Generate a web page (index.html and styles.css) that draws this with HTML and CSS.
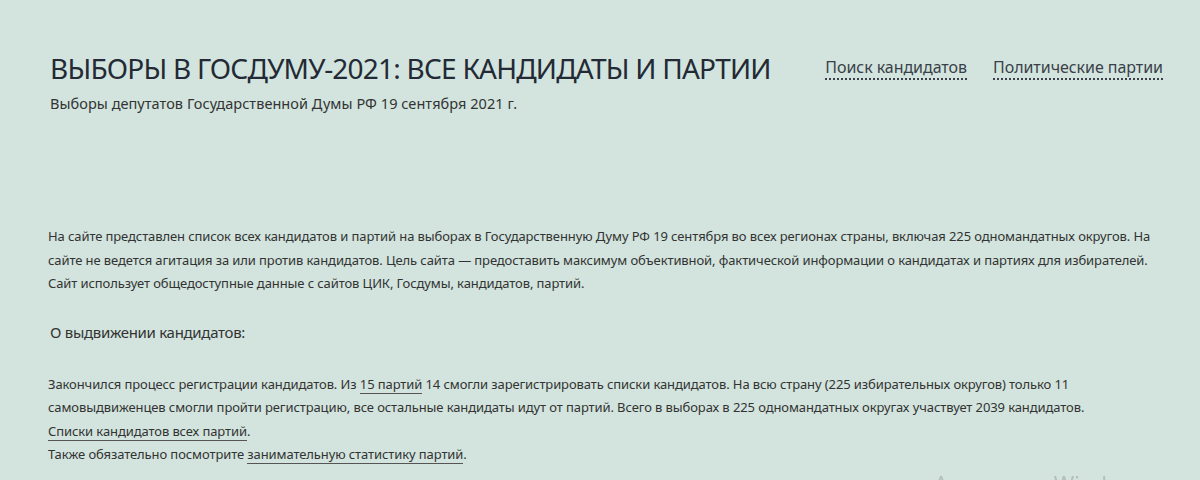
FILE: index.html
```html
<!DOCTYPE html>
<html lang="ru">
<head>
<meta charset="utf-8">
<title>Выборы в Госдуму-2021</title>
<link rel="stylesheet" href="styles.css">
</head>
<body>
<div class="page">
  <header class="header">
    <div class="brand">
      <h1 class="title">ВЫБОРЫ В ГОСДУМУ-2021: ВСЕ КАНДИДАТЫ И ПАРТИИ</h1>
      <div class="subtitle">Выборы депутатов Государственной Думы РФ 19 сентября 2021 г.</div>
    </div>
    <nav class="nav">
      <a class="nav-link" href="#">Поиск кандидатов</a>
      <a class="nav-link" href="#">Политические партии</a>
    </nav>
  </header>
  <main class="content">
    <p class="intro">На сайте представлен список всех кандидатов и партий на выборах в Государственную Думу РФ 19 сентября во всех регионах страны, включая 225 одномандатных округов. На сайте не ведется агитация за или против кандидатов. Цель сайта — предоставить максимум объективной, фактической информации о кандидатах и партиях для избирателей. Сайт использует общедоступные данные с сайтов ЦИК, Госдумы, кандидатов, партий.</p>
    <h2 class="section-title">О выдвижении кандидатов:</h2>
    <p class="text">Закончился процесс регистрации кандидатов. Из <a class="link" href="#">15 партий</a> 14 смогли зарегистрировать списки кандидатов. На всю страну (225 избирательных округов) только 11 самовыдвиженцев смогли пройти регистрацию, все остальные кандидаты идут от партий. Всего в выборах в 225 одномандатных округах участвует 2039 кандидатов.<br><a class="link" href="#">Списки кандидатов всех партий</a>.<br>Также обязательно посмотрите <a class="link" href="#">занимательную статистику партий</a>.</p>
  </main>
</div>
<div class="watermark">Активация Windows</div>
</body>
</html>
```
FILE: styles.css
```css
html, body {
  margin: 0;
  padding: 0;
  background: #d2e4dd;
  height: 100%;
  overflow: hidden;
}
body {
  font-family: "Noto Sans", "Open Sans", "Liberation Sans", sans-serif;
  color: #333333;
}
.page {
  padding: 0 37px 0 48px;
}
.header {
  display: flex;
  justify-content: space-between;
  align-items: flex-start;
  padding-top: 48px;
}
.title {
  margin: 0;
  font-weight: 400;
  font-size: 28px;
  letter-spacing: -0.78px;
  line-height: 40px;
  color: #232a35;
  padding-left: 2px;
  white-space: nowrap;
}
.subtitle {
  margin-top: 5px;
  font-size: 14.5px;
  letter-spacing: 0.05px;
  line-height: 20px;
  padding-left: 2px;
  color: #333;
  white-space: nowrap;
}
.nav {
  display: flex;
  gap: 26px;
  padding-top: 8px;
  flex: none;
}
.nav-link {
  font-size: 16px;
  letter-spacing: -0.05px;
  line-height: 22px;
  color: #3a3f4a;
  text-decoration: none;
  border-bottom: 2px dotted #3a3f4a;
  white-space: nowrap;
}
.content {
  padding-top: 112px;
}
.intro, .text {
  margin: 0;
  font-size: 13px;
  letter-spacing: -0.1px;
  line-height: 23.5px;
}
.section-title {
  margin: 25px 0 30px;
  font-weight: 400;
  font-size: 15px;
  letter-spacing: -0.3px;
  line-height: 22px;
  padding-left: 2px;
  color: #333;
}
.link {
  color: #333;
  text-decoration: none;
  border-bottom: 1px solid #555;
}
.watermark {
  position: fixed;
  left: 934px;
  top: 468px;
  font-size: 22px;
  color: #b4bebb;
  white-space: nowrap;
}
```
